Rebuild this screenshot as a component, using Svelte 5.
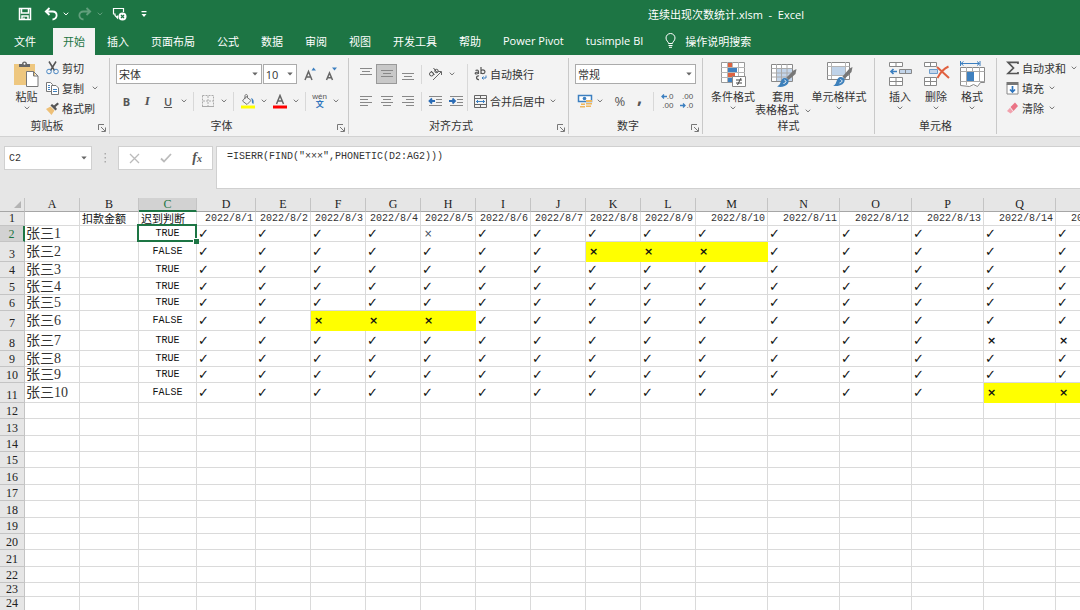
<script lang="ts">
	const tabs = ['开始', '插入', '页面布局', '公式', '数据', '审阅', '视图', '开发工具', '帮助', 'Power Pivot', 'tusimple BI'];
	let activeTab = $state('开始');

	const columns = [
		{ name: 'A', width: 55 },
		{ name: 'B', width: 59 },
		{ name: 'C', width: 58 },
		{ name: 'D', width: 59 },
		...'EFGHIJKL'.split('').map((name) => ({ name, width: 55 })),
		...'MNOPQR'.split('').map((name) => ({ name, width: 72 }))
	];
	const tableWidth = 25 + columns.reduce((sum, c) => sum + c.width, 0);

	const days = Array.from({ length: 15 }, (_, i) => i + 1);

	// absent: day numbers marked ×, flagged: the ones that are part of a run of three
	const people = [
		{ name: '张三1', late: true, absent: [5], flagged: [], height: 16 },
		{ name: '张三2', late: false, absent: [8, 9, 10], flagged: [8, 9, 10], height: 20 },
		{ name: '张三3', late: true, absent: [], flagged: [], height: 16 },
		{ name: '张三4', late: true, absent: [], flagged: [], height: 17 },
		{ name: '张三5', late: true, absent: [], flagged: [], height: 16 },
		{ name: '张三6', late: false, absent: [3, 4, 5], flagged: [3, 4, 5], height: 20 },
		{ name: '张三7', late: true, absent: [14, 15], flagged: [], height: 20 },
		{ name: '张三8', late: true, absent: [], flagged: [], height: 16 },
		{ name: '张三9', late: true, absent: [], flagged: [], height: 16 },
		{ name: '张三10', late: false, absent: [14, 15], flagged: [14, 15], height: 20 }
	] as Array<{ name: string; late: boolean; absent: number[]; flagged: number[]; height: number }>;

	const emptyRows = [16, 17, 16, 16, 17, 16, 17, 16, 16, 17, 16, 14, 14];

	let formula = $state('=ISERR(FIND("×××",PHONETIC(D2:AG2)))');
	let cellName = $state('C2');
</script>

{#snippet chevron()}
	<svg class="chevron" width="6" height="4" viewBox="0 0 6 4"><path d="M.7.7 3 2.9 5.3.7" fill="none" stroke="currentColor" /></svg>
{/snippet}

{#snippet more(label: string)}
	<button class="more" aria-label={label}>{@render chevron()}</button>
{/snippet}

{#snippet caret()}
	<svg class="caret" width="6" height="4" viewBox="0 0 6 4"><path d="M.3.4h5.400L3 3.500z" fill="#666" /></svg>
{/snippet}

{#snippet launcher(label: string)}
	<button class="launcher" aria-label={label}>
		<svg width="8" height="8" viewBox="0 0 8 8" fill="none" stroke="#777"><path d="M.5 6V.5H6M3 3l4 4M7.5 3.500v4h-4" /></svg>
	</button>
{/snippet}

{#snippet lines(widths: number[], align: string, top: number)}
	<svg width="14" height="14" viewBox="0 0 14 14" fill="#888">
		{#each widths as w, i}
			<rect x={align === 'left' ? 1 : align === 'right' ? 13 - w : 7 - w / 2} y={top + i * 3} width={w} height="1" />
		{/each}
	</svg>
{/snippet}

{#snippet indent(out: boolean)}
	<svg width="15" height="13" viewBox="0 0 15 13">
		<path d={out ? 'M1 1.500h13M8 4.500h6M8 7.500h6M1 10.500h13' : 'M1 1.500h13M8 4.500h6M8 7.500h6M1 10.500h13'} stroke="#888" />
		<path d={out ? 'M7 6H1.500M4 3.500 1.500 6 4 8.500' : 'M0 6h5.500M3.500 3.500 6 6 3.500 8.500'} fill="none" stroke="#2b6cb5" stroke-width="1.800" />
	</svg>
{/snippet}

<div class="excel">
	<header class="titlebar">
		<div class="quick">
			<button aria-label="保存">
				<svg width="14" height="14" viewBox="0 0 14 14" fill="none" stroke="#fff" stroke-width="1.500"><path d="M1.500 1.500h11v11h-11zM3.500 2v4h7V2M4 12.500v-3.500h6v3.500M6 10.500v2" /></svg>
			</button>
			<button class="undo" aria-label="撤消">
				<svg width="14" height="14" viewBox="0 0 14 14" fill="none" stroke="#fff" stroke-width="1.800"><path d="M5.500 1 1.800 4.500 5.500 8M2 4.500h6.500c5.500 0 5.500 7.500 0 8" /></svg>
			</button>
			{@render more('撤消列表')}
			<button class="faded" aria-label="恢复">
				<svg width="14" height="14" viewBox="0 0 14 14" fill="none" stroke="#fff" stroke-width="1.800"><path d="M8.500 1l3.700 3.500L8.500 8M12 4.500H5.500c-5.500 0-5.500 7.500 0 8" /></svg>
			</button>
			<span class="faded">{@render more('恢复列表')}</span>
			<button aria-label="删除批注">
				<svg width="15" height="14" viewBox="0 0 15 14" fill="none" stroke="#fff" stroke-width="1.200"><path d="M5.500 8.500V11L3 8.500V7H1.500V1.500h10V5" /><circle cx="10.500" cy="9.500" r="4" fill="#fff" stroke="none" /><path d="m9 8 3 3m0-3-3 3" stroke="#1d7544" /></svg>
			</button>
			<button class="customize" aria-label="自定义快速访问工具栏">
				<svg width="6" height="7" viewBox="0 0 6 7" fill="#fff"><path d="M.5 0h5v1.200h-5zM.5 3h5L3 6z" /></svg>
			</button>
		</div>
		<div class="doc-title">连续出现次数统计.xlsm&nbsp; -&nbsp; Excel</div>
	</header>

	<nav class="tabs">
		<button class="tab file">文件</button>
		{#each tabs as tab}
			<button class="tab" class:active={tab === activeTab} onclick={() => (activeTab = tab)}>{tab}</button>
		{/each}
		<button class="tab tell-me">
			<svg width="11" height="15" viewBox="0 0 11 15" fill="none" stroke="#fff"><path d="M3.500 10.500C3.500 8.500 1 8 1 5a4.500 4.500 0 0 1 9 0c0 3-2.500 3.500-2.500 5.500zM3.500 12.500h4M4 14.300h3" /></svg>
			操作说明搜索
		</button>
	</nav>

	<div class="ribbon">
		<section class="group">
			<div class="body clipboard">
				<button class="big">
					<span class="big-icon">
						<svg width="25" height="27" viewBox="0 0 25 27">
							<path d="M0 3h21v21H0z" fill="#eec77f" />
							<path d="M5 6V3h3a2.500 2.500 0 0 1 5 0h3v3z" fill="#666" /><circle cx="10.500" cy="2.800" r="1" fill="#fff" />
							<path d="M12.500 10.500h7l4.500 4.500v10.500H12.500zM19.500 10.500V15H24" fill="#fff" stroke="#777" />
						</svg>
					</span>
					<span class="label">粘贴</span>
					<span class="drop">{@render chevron()}</span>
				</button>
				<div class="list">
					<button class="labelled">
						<svg width="13" height="14" viewBox="0 0 13 14" fill="none"><path d="m3 .5 5.500 9M10 .5l-5.500 9" stroke="#555" stroke-width="1.500" /><circle cx="3" cy="10.500" r="2.300" stroke="#4b88c4" /><circle cx="10" cy="10.500" r="2.300" stroke="#4b88c4" /></svg>
						剪切
					</button>
					<div class="row">
						<button class="labelled">
							<svg width="13" height="13" viewBox="0 0 13 13" fill="#fff" stroke="#777"><path d="M.5.5h4l2 2v7h-6z" /><path d="M5.500 3.500h4.500l2.500 2.500v6.500h-7z" /><path d="M2 3.500h2M2 5.500h2M2 7.500h2M7 7.500h4M7 9.500h4" stroke="#3f80bf" /></svg>
							复制
						</button>
						{@render more('复制选项')}
					</div>
					<button class="labelled">
						<svg width="13" height="13" viewBox="0 0 13 13"><path d="m0 7 4.500-2.500 4 4L5.500 13z" fill="#eec077" /><path d="m4.500 3.500 5 5 1.500-1.500-1.500-2L13 2 11.500.5 8 3.500 6 2z" fill="#555" /></svg>
						格式刷
					</button>
				</div>
			</div>
			<footer class="with-launcher">剪贴板{@render launcher('剪贴板设置')}</footer>
		</section>

		<section class="group">
			<div class="body stack">
				<div class="row fields">
					<label class="combo font-name">
						<select aria-label="字体"><option>宋体</option></select>
						{@render caret()}
					</label>
					<label class="combo font-size">
						<select aria-label="字号"><option>10</option></select>
						{@render caret()}
					</label>
					<button class="tool grow" aria-label="增大字号">
						<svg width="13" height="14" viewBox="0 0 13 14" fill="none"><path d="M1 13 4.500 4.500 8 13M2.300 10h4.400" stroke="#666" stroke-width="1.500" /><path d="M7.500 3.500 9.500.5l2.500 3z" fill="#3c7fc0" /></svg>
					</button>
					<button class="tool" aria-label="减小字号">
						<svg width="13" height="14" viewBox="0 0 13 14" fill="none"><path d="M1.500 13 4.500 6l3 7M2.500 10.700h4" stroke="#666" stroke-width="1.500" /><path d="M7 .5h5l-2.500 3z" fill="#3c7fc0" /></svg>
					</button>
				</div>
				<div class="row">
					<button class="tool letter"><b>B</b></button>
					<button class="tool letter"><i>I</i></button>
					<button class="tool letter"><u>U</u></button>
					{@render more('下划线')}
					<span class="sep"></span>
					<button class="tool" aria-label="边框">
						<svg width="12" height="12" viewBox="0 0 12 12" fill="none" stroke="#aaa"><path d="M.5.5h11v11H.5zM6 1v10M1 6h10" stroke-dasharray="2 1" /><path d="M0 11.500h12" /></svg>
					</button>
					{@render more('边框选项')}
					<span class="sep"></span>
					<button class="tool" aria-label="填充颜色">
						<svg width="15" height="15" viewBox="0 0 15 15" fill="none"><path d="m6 2.500 5 4-4 4L2.500 7zM5 5V1.500a1.300 1.300 0 0 1 2.500 0V4" stroke="#777" /><path d="M11 4c2.500.5 3 2.500 2.500 6-1.500-.5-2-2-1.500-3.500z" fill="#3c7fc0" /><path d="M1 11.500h14v3H1z" fill="#ff0" /></svg>
					</button>
					{@render more('填充颜色选项')}
					<button class="tool" aria-label="字体颜色">
						<svg width="14" height="15" viewBox="0 0 14 15" fill="none"><path d="m3.500 10 3.500-8.500L10.500 10M4.500 7h5" stroke="#666" stroke-width="1.500" /><path d="M0 11.500h14v3H0z" fill="#f00" /></svg>
					</button>
					{@render more('字体颜色选项')}
					<span class="sep"></span>
					<button class="tool phonetic" aria-label="拼音"><span>wén</span><span class="wen">文</span></button>
					{@render more('拼音选项')}
				</div>
			</div>
			<footer class="with-launcher">字体{@render launcher('字体设置')}</footer>
		</section>

		<section class="group">
			<div class="body align">
				<div class="stack">
					<div class="row">
						<button class="tool" aria-label="顶端对齐">{@render lines([12, 8, 12], 'center', 1)}</button>
						<button class="tool pressed" aria-label="垂直居中">{@render lines([12, 8, 12], 'center', 3)}</button>
						<button class="tool" aria-label="底端对齐">{@render lines([12, 8, 12], 'center', 6)}</button>
						<span class="sep"></span>
						<button class="tool" aria-label="方向">
							<svg width="15" height="14" viewBox="0 0 15 14" fill="none" stroke="#555"><circle cx="3.500" cy="7" r="2" /><path d="m3 4 3.500 4M5.500 1l4 5" /><circle cx="8.500" cy="4" r="1.700" /><path d="m5 13 8-8M10 4.500h3.500V8" stroke="#666" /></svg>
						</button>
						{@render more('方向选项')}
					</div>
					<div class="row">
						<button class="tool" aria-label="左对齐">{@render lines([12, 8, 12, 8], 'left', 2)}</button>
						<button class="tool" aria-label="居中">{@render lines([12, 8, 12, 8], 'center', 2)}</button>
						<button class="tool" aria-label="右对齐">{@render lines([12, 8, 12, 8], 'right', 2)}</button>
						<span class="sep"></span>
						<button class="tool" aria-label="减少缩进量">{@render indent(true)}</button>
						<button class="tool" aria-label="增加缩进量">{@render indent(false)}</button>
					</div>
				</div>
				<div class="stack wrap">
					<button class="labelled">
						<svg width="13" height="14" viewBox="0 0 13 14" fill="none" stroke="#555"><path d="M1.500 3.500c2-1 3 0 3 1v2.500M4.500 5c-4 0-4 2-2 2 1 0 2-.5 2-1.500M7 0v7M7 4.500c0-2.500 4-2 4 .3S7 7.500 7 5" stroke-width="1.200" /><path d="M5 9c-3-1-3.500 4 0 3.500" stroke-width="1.300" /><path d="M12 8.500v2.500H8M9.500 9.500 8 11l1.500 1.500" stroke="#3c7fc0" /></svg>
						自动换行
					</button>
					<div class="row">
						<button class="labelled">
							<svg width="13" height="13" viewBox="0 0 13 13" fill="none" stroke="#666"><path d="M.5.5h12v12H.5zM.5 3.500h12M.5 9.500h12M6.500.5v3M6.500 9.500v3" /><path d="M2 6.500h9M4 5 2.500 6.500 4 8M9 5l1.500 1.500L9 8" stroke="#3c7fc0" /></svg>
							合并后居中
						</button>
						{@render more('合并选项')}
					</div>
				</div>
			</div>
			<footer class="with-launcher">对齐方式{@render launcher('对齐设置')}</footer>
		</section>

		<section class="group">
			<div class="body stack">
				<label class="combo number">
					<select aria-label="数字格式"><option>常规</option></select>
					{@render caret()}
				</label>
				<div class="row">
					<button class="tool" aria-label="会计数字格式">
						<svg width="16" height="14" viewBox="0 0 16 14" fill="none"><path d="M1.500 1.500h13v6h-13z" fill="#fff" stroke="#3c7fc0" stroke-width="1.500" /><circle cx="7.500" cy="4.500" r="1.800" fill="#3c7fc0" /><path d="M9 6h6v2H9zM9 9h6v1.500H9zM9 11.500h5V13H9zM4 9.500h4V11H4zM3 12h5v1.500H3z" fill="#eeb65c" /></svg>
					</button>
					{@render more('会计选项')}
					<button class="tool percent">%</button>
					<button class="tool comma">,</button>
					<span class="sep"></span>
					<button class="tool decimals">
						<span><svg width="6" height="5" viewBox="0 0 6 5" fill="none" stroke="#3c7fc0" stroke-width="1.300"><path d="M6 2.500H1M3 .5l-2 2 2 2" /></svg>.0</span>
						<span>.00</span>
					</button>
					<button class="tool decimals">
						<span>.00</span>
						<span><svg width="6" height="5" viewBox="0 0 6 5" fill="none" stroke="#3c7fc0" stroke-width="1.300"><path d="M0 2.500h5M3 .5l2 2-2 2" /></svg>.0</span>
					</button>
				</div>
			</div>
			<footer class="with-launcher">数字{@render launcher('数字设置')}</footer>
		</section>

		<section class="group">
			<div class="body bigs">
				<button class="big">
					<span class="big-icon">
						<svg width="27" height="27" viewBox="0 0 27 27" fill="none"><path d="M1.500 1.500h23v20h-23z" fill="#fff" stroke="#999" /><path d="M1 6.500h24M1 11.500h24M1 16.500h24M7.500 1v20M12.500 1v20M18.500 1v20" stroke="#b5b5b5" /><path d="M8 2h4v4H8zM8 12h7v4H8z" fill="#dc6342" /><path d="M8 7h9v4H8zM8 17h4v4H8z" fill="#3f80bf" /><path d="M12.500 15.500h13v10h-13z" fill="#fff" stroke="#888" /><path d="M16 19h6M16 22h6M21 17l-3.500 7" stroke="#444" /></svg>
					</span>
					<span class="label">条件格式</span>
					<span class="drop">{@render chevron()}</span>
				</button>
				<button class="big">
					<span class="big-icon">
						<svg width="27" height="27" viewBox="0 0 27 27" fill="none"><path d="M1.500 3.500h21v17h-21z" fill="#fff" stroke="#888" /><path d="M7 8h15v12H7z" fill="#c3d5ea" /><path d="M1.500 7.500h21M1.500 12h21M1.500 16h21M6.500 3v17M11.500 3v17M17 3v17" stroke="#aaa" /><path d="m26.500 8-1 5-7 6-2-2.500 7-7z" fill="#777" /><path d="M15 17c3.500.5 4.500 3 3 5.500-2 3-7 4-11 3 3-1.500 3-3 4-5.500s2.500-3 4-3z" fill="#3d80bb" /><path d="M14.500 19c2.500 1 1.500 3-1 3.500" stroke="#fff" /></svg>
					</span>
					<span class="label">套用</span>
					<span class="label">表格格式 {@render chevron()}</span>
				</button>
				<button class="big">
					<span class="big-icon">
						<svg width="27" height="27" viewBox="0 0 27 27" fill="none"><path d="M1.500 1.500h22v17h-22z" fill="#fff" stroke="#888" /><path d="M5.500 5.500h14v9h-14z" fill="#bfd3e9" /><path d="M1.500 5.500h22M1.500 14.500h22M5.500 1v17M19.500 1v17" stroke="#b5b5b5" /><path d="m26.500 6-1 5-7 7-2-2.500 7-8z" fill="#777" /><path d="M15 16c3.500.5 4.500 3 3 5.500-2 3-7 4-11 3.500 3-1.500 3-3.500 4-6s2.500-3 4-3z" fill="#3d80bb" /><path d="M14.500 18.500c2.500 1 1.500 3-1 3.500" stroke="#fff" /></svg>
					</span>
					<span class="label">单元格样式</span>
					<span class="drop">{@render chevron()}</span>
				</button>
			</div>
			<footer>样式</footer>
		</section>

		<section class="group">
			<div class="body bigs cells">
				<button class="big">
					<span class="big-icon">
						<svg width="25" height="27" viewBox="0 0 25 27" fill="#fff" stroke="#888"><path d="M1.500 1.500h13v4h-13zM8 1.500v4" /><path d="M11.500 8.500h12v4h-12zM17.500 8.500v4" fill="#c3d5ea" /><path d="M1.500 16.500h13v8h-13zM8 16.500v8M1.500 20.500h13" /><path d="M9 10.500H3M5.500 8 3 10.500 5.500 13" fill="none" stroke="#3c7fc0" stroke-width="1.700" /></svg>
					</span>
					<span class="label">插入</span>
					<span class="drop">{@render chevron()}</span>
				</button>
				<button class="big">
					<span class="big-icon">
						<svg width="27" height="27" viewBox="0 0 27 27" fill="#fff" stroke="#888"><path d="M1.500 1.500h12v4h-12zM7.500 1.500v4" /><path d="M6.500 8.500h8v4h-8z" fill="#c3d5ea" stroke="#6d9dcc" /><path d="M1.500 16.500h12v8h-12zM7.500 16.500v8M1.500 20.500h12" /><path d="m14 6 12 11M25.500 5.500C20 8 17 12 14.500 17" fill="none" stroke="#e0603f" stroke-width="2" /></svg>
					</span>
					<span class="label">删除</span>
					<span class="drop">{@render chevron()}</span>
				</button>
				<button class="big">
					<span class="big-icon">
						<svg width="27" height="27" viewBox="0 0 27 27" fill="none"><path d="M1.500 6.500h24v15h-4l-3 4-4-2-4 2-9-1z" fill="#fff" stroke="#888" /><path d="M1.500 10.500h24M1.500 20.500h24M7.500 6v18M20.500 6v15M13.500 6v5" stroke="#aaa" /><path d="M8 11h7v9H8z" fill="#3f80bf" /><path d="M2 2.500h18M4.500.5 2 2.500l2.500 2M18 .5l2.500 2-2.500 2M1.500 0v5M21 0v5" stroke="#3c7fc0" /></svg>
					</span>
					<span class="label">格式</span>
					<span class="drop">{@render chevron()}</span>
				</button>
			</div>
			<footer>单元格</footer>
		</section>

		<section class="group last">
			<div class="list edit">
				<div class="row">
					<button class="labelled">
						<svg width="13" height="14" viewBox="0 0 13 14" fill="none" stroke="#555" stroke-width="1.700"><path d="M12 3V1.300H2L7.500 7 2 12.500h10V11" /></svg>
						自动求和
					</button>
					{@render more('求和选项')}
				</div>
				<div class="row">
					<button class="labelled">
						<svg width="13" height="14" viewBox="0 0 13 14" fill="none"><path d="M1 3.500h11v9.500H1z" fill="#fff" stroke="#888" /><path d="M.5 1h12v3H.5z" fill="#777" /><path d="M6.500 5v6M4 8.500 6.500 11 9 8.500" stroke="#2f75bd" stroke-width="1.700" /></svg>
						填充
					</button>
					{@render more('填充选项')}
				</div>
				<div class="row">
					<button class="labelled">
						<svg width="13" height="13" viewBox="0 0 13 13"><path d="m4.500 5 4.500-4.500 3 3.500-4.500 5z" fill="#ea7385" /><path d="m4 5.800 3 3.700-2.500 2L1 9z" fill="#f2a1ad" /></svg>
						清除
					</button>
					{@render more('清除选项')}
				</div>
			</div>
		</section>
	</div>

	<div class="formula-bar">
		<div class="name-box">
			<input aria-label="名称框" bind:value={cellName} />
			{@render caret()}
		</div>
		<svg class="dots" width="3" height="12" viewBox="0 0 3 12" fill="#aaa"><path d="M.5 1h1.500v1.500H.5zM.5 5h1.500v1.500H.5zM.5 9h1.500v1.500H.5z" /></svg>
		<div class="entry">
			<button aria-label="取消"><svg width="11" height="11" viewBox="0 0 11 11" stroke="#bbb" stroke-width="1.300"><path d="m1 1 9 9m0-9-9 9" /></svg></button>
			<button aria-label="输入"><svg width="12" height="10" viewBox="0 0 12 10" fill="none" stroke="#bbb" stroke-width="1.800"><path d="m1 5.500 3 3L11 1" /></svg></button>
			<button class="fx" aria-label="插入函数">f<small>x</small></button>
		</div>
		<textarea class="formula" aria-label="编辑栏" spellcheck="false" bind:value={formula}></textarea>
	</div>

	<main class="sheet">
		<table style="width: {tableWidth}px">
			<colgroup>
				<col class="index" />
				{#each columns as column}
					<col style="width: {column.width}px" />
				{/each}
			</colgroup>
			<thead>
				<tr>
					<th class="corner"><svg width="7" height="7" viewBox="0 0 7 7"><path d="M7 0v7H0z" fill="#b4b4b4" /></svg></th>
					{#each columns as column}
						<th class:selected={column.name === 'C'}>{column.name}</th>
					{/each}
				</tr>
			</thead>
			<tbody>
				<tr style="height: 14px">
					<th>1</th>
					<td></td>
					<td class="title">扣款金额</td>
					<td class="title">迟到判断</td>
					{#each days as day}
						<td class="date">2022/8/{day}</td>
					{/each}
				</tr>
				{#each people as person, i}
					<tr style="height: {person.height}px">
						<th class:selected={i === 0}>{i + 2}</th>
						<td class="name">{person.name}</td>
						<td></td>
						<td class="result" class:cursor={i === 0}>{person.late ? 'TRUE' : 'FALSE'}</td>
						{#each days as day}
							{#if person.absent.includes(day)}
								<td class="cross" class:light={person.absent.length === 1} class:flagged={person.flagged.includes(day)}>×</td>
							{:else}
								<td class="check">✓</td>
							{/if}
						{/each}
					</tr>
				{/each}
				{#each emptyRows as height, i}
					<tr style="height: {height}px">
						<th>{i + 12}</th>
						{#each columns as _}
							<td></td>
						{/each}
					</tr>
				{/each}
			</tbody>
		</table>
	</main>
</div>

<style>
	:global(body) {
		overflow: hidden;
		background: #fff;
	}

	.excel {
		--green: #1d7544;
		min-height: 100vh;
		font-family: 'Open Sans', 'Noto Sans CJK SC', sans-serif;
		font-size: 11px;
		color: #333;
	}

	.excel * {
		box-sizing: border-box;
	}

	button {
		display: flex;
		align-items: center;
		justify-content: center;
		padding: 0;
		border: 0;
		background: none;
		font: inherit;
		color: inherit;
		white-space: nowrap;
	}

	svg {
		flex-shrink: 0;
	}

	.titlebar {
		display: grid;
		grid-template-columns: 3fr 2fr;
		align-items: center;
		height: 28px;
		background: var(--green);
		color: #fff;
	}

	.quick {
		display: flex;
		align-items: center;
		gap: 6px;
		padding-left: 18px;
	}

	.quick .undo {
		margin-left: 6px;
	}

	.quick .more {
		margin-left: -4px;
		color: #fff;
	}

	.quick .customize {
		margin-left: 8px;
	}

	.faded {
		opacity: 0.3;
	}

	.doc-title {
		white-space: nowrap;
	}

	.tabs {
		display: flex;
		gap: 2px;
		height: 27px;
		padding-left: 4px;
		background: var(--green);
	}

	.tab {
		padding: 0 10px 2px;
		color: #fff;
	}

	.tab.file {
		margin-right: 5px;
	}

	.tab.active {
		background: #f3f3f3;
		color: var(--green);
	}

	.tell-me {
		gap: 9px;
	}

	.ribbon {
		display: grid;
		grid-template-columns: 110px 239px 220px 134px 172px 122px 1fr;
		height: 82px;
		padding: 3px 0 2px;
		border-bottom: 1px solid #d2d2d2;
		background: #f3f3f3;
	}

	.group {
		display: flex;
		flex-direction: column;
		min-width: 0;
		border-right: 1px solid #c9c9c9;
	}

	.group.last {
		border-right: 0;
	}

	.body {
		flex: 1;
		padding: 6px 6px 0;
	}

	.group footer {
		height: 16px;
		line-height: 16px;
		text-align: center;
	}

	.group .with-launcher {
		display: grid;
		grid-template-columns: 1fr 15px;
		align-items: center;
	}

	.launcher {
		margin-top: 4px;
	}

	.row {
		display: flex;
		align-items: center;
	}

	.stack {
		display: flex;
		flex-direction: column;
		gap: 7px;
	}

	.stack > * {
		height: 20px;
	}

	.tool {
		width: 21px;
		height: 20px;
		color: #555;
	}

	.tool.pressed {
		border: 1px solid #999;
		background: #c8c8c8;
	}

	.more {
		width: 12px;
		height: 18px;
		color: #777;
	}

	.big .chevron {
		color: #777;
	}

	.sep {
		width: 1px;
		height: 19px;
		margin: 0 3px;
		background: #d8d8d8;
	}

	.letter b {
		font-weight: 700;
	}

	.letter i {
		font-family: 'Liberation Serif', serif;
		font-size: 13px;
		font-weight: 700;
	}

	.letter u {
		font-weight: 600;
	}

	.phonetic {
		flex-direction: column;
		font-family: 'Liberation Sans', 'Noto Sans CJK SC', sans-serif;
		font-size: 8px;
		line-height: 8px;
	}

	.wen {
		color: #2f75bd;
		font-weight: 700;
	}

	.clipboard {
		display: flex;
		gap: 7px;
		padding: 0 0 0 14px;
	}

	.clipboard .big {
		width: 25px;
		padding-top: 3px;
	}

	.list {
		display: flex;
		flex-direction: column;
		align-items: flex-start;
	}

	.list > * {
		height: 20px;
	}

	.labelled {
		gap: 3px;
	}

	.list .more {
		margin-left: 5px;
	}

	.edit {
		padding-left: 9px;
	}

	.edit .more {
		margin-left: 2px;
	}

	.combo {
		display: grid;
		align-items: center;
		height: 20px;
	}

	.combo select,
	.combo .caret {
		grid-area: 1 / 1;
	}

	.combo select {
		height: 20px;
		padding: 0 2px;
		border: 1px solid #ababab;
		border-radius: 0;
		appearance: none;
		background: #fff;
		font: inherit;
		color: #333;
	}

	.combo .caret {
		justify-self: end;
		margin-right: 4px;
		pointer-events: none;
	}

	.font-name {
		width: 149px;
	}

	.font-size {
		width: 35px;
	}

	.fields {
		gap: 1px;
	}

	.tool.grow {
		margin-left: 2px;
	}

	.number {
		width: 121px;
	}

	.align {
		display: flex;
	}

	.align .wrap {
		padding-left: 6px;
		border-left: 1px solid #d8d8d8;
		align-items: flex-start;
	}

	.align .stack {
		height: 47px;
	}

	.wrap .more {
		margin-left: 2px;
	}

	.percent {
		margin-left: 4px;
		font-size: 13px;
	}

	.comma {
		padding-bottom: 8px;
		font-size: 18px;
		font-weight: 700;
	}

	.decimals {
		flex-direction: column;
		align-items: center;
		font-family: 'Liberation Sans', sans-serif;
		font-size: 8px;
		line-height: 9px;
	}

	.decimals span {
		display: flex;
		align-items: center;
		justify-content: flex-end;
		width: 14px;
	}

	.big {
		flex-direction: column;
		justify-content: flex-start;
	}

	.big-icon {
		height: 29px;
	}

	.label {
		line-height: 13px;
	}

	.label .chevron {
		margin-left: 3px;
		vertical-align: middle;
	}

	.drop {
		display: flex;
		align-items: center;
		height: 10px;
	}

	.bigs {
		display: grid;
		grid-template-columns: 46px 54px 58px;
		align-items: start;
		padding: 3px 7px 0;
	}

	.bigs.cells {
		grid-template-columns: repeat(3, 36px);
	}

	.formula-bar {
		display: flex;
		align-items: flex-start;
		height: 61px;
		padding: 9px 0 0 4px;
		background: #e6e6e6;
	}

	.name-box,
	.entry {
		display: flex;
		align-items: center;
		height: 24px;
		border: 1px solid #d0d0d0;
		background: #fff;
	}

	.name-box {
		width: 88px;
		padding-right: 4px;
	}

	.name-box input {
		flex: 1;
		min-width: 0;
		padding: 0 4px;
		border: 0;
		outline: 0;
		background: none;
		font: 10px 'Liberation Mono', monospace;
		color: #333;
	}

	.dots {
		margin: 6px 11px 6px 12px;
	}

	.entry {
		justify-content: space-around;
		width: 95px;
	}

	.fx {
		font: italic 700 14px 'Liberation Serif', serif;
		color: #555;
	}

	.fx small {
		font-size: 10px;
	}

	.formula {
		flex: 1;
		height: 43px;
		margin-left: 3px;
		padding: 3px 10px;
		border: 1px solid #d0d0d0;
		border-right: 0;
		outline: 0;
		resize: none;
		background: #fff;
		font: 10px/14px 'Liberation Mono', 'Noto Sans CJK SC', monospace;
		color: #333;
	}

	.sheet {
		overflow: hidden;
	}

	table {
		table-layout: fixed;
		border-collapse: separate;
		border-spacing: 0;
		line-height: 13px;
	}

	.index {
		width: 25px;
	}

	th,
	td {
		height: inherit;
		padding: 0;
		overflow: hidden;
		border-right: 1px solid #dadada;
		border-bottom: 1px solid #dadada;
		white-space: nowrap;
		text-align: left;
	}

	th {
		border-color: #c4c4c4;
		background: #e6e6e6;
		font: 12px/13px 'Liberation Serif', serif;
		color: #222;
		text-align: center;
		vertical-align: bottom;
	}

	thead th {
		height: 14px;
		border-bottom-color: #a6a6a6;
	}

	.corner svg {
		display: block;
		margin: 3px 3px 3px auto;
	}

	th.selected {
		background: #d2d2d2;
		color: var(--green);
	}

	thead th.selected {
		border-bottom: 2px solid var(--green);
		line-height: 12px;
	}

	tbody th.selected {
		border-right: 2px solid var(--green);
	}

	.title {
		padding-left: 2px;
		color: #111;
	}

	.date {
		padding-right: 2px;
		font: 10px/13px 'Liberation Mono', monospace;
		text-align: right;
	}

	.name {
		padding-left: 1px;
		font: 14px/15px 'Liberation Serif', 'Noto Sans CJK SC', serif;
	}

	.result {
		font: 10px/13px 'Liberation Mono', monospace;
		text-align: center;
		color: #111;
	}

	.cursor {
		position: relative;
		overflow: visible;
	}

	.cursor::before {
		content: '';
		position: absolute;
		inset: -2px -1px -1px -2px;
		border: 2px solid var(--green);
	}

	.cursor::after {
		content: '';
		position: absolute;
		right: -3px;
		bottom: -3px;
		width: 5px;
		height: 5px;
		border: 1px solid #fff;
		border-width: 1px 0 0 1px;
		background: var(--green);
	}

	.check {
		padding-left: 1px;
		font: 700 13px/13px 'DejaVu Sans', sans-serif;
		color: #111;
	}

	.cross {
		padding-left: 3px;
		font: 700 11px/13px 'DejaVu Sans', sans-serif;
		color: #111;
	}

	.cross.light {
		font-weight: 400;
		font-size: 10px;
		color: #3a4a5a;
	}

	.flagged {
		border-color: #ff0;
		background: #ff0;
	}
</style>
